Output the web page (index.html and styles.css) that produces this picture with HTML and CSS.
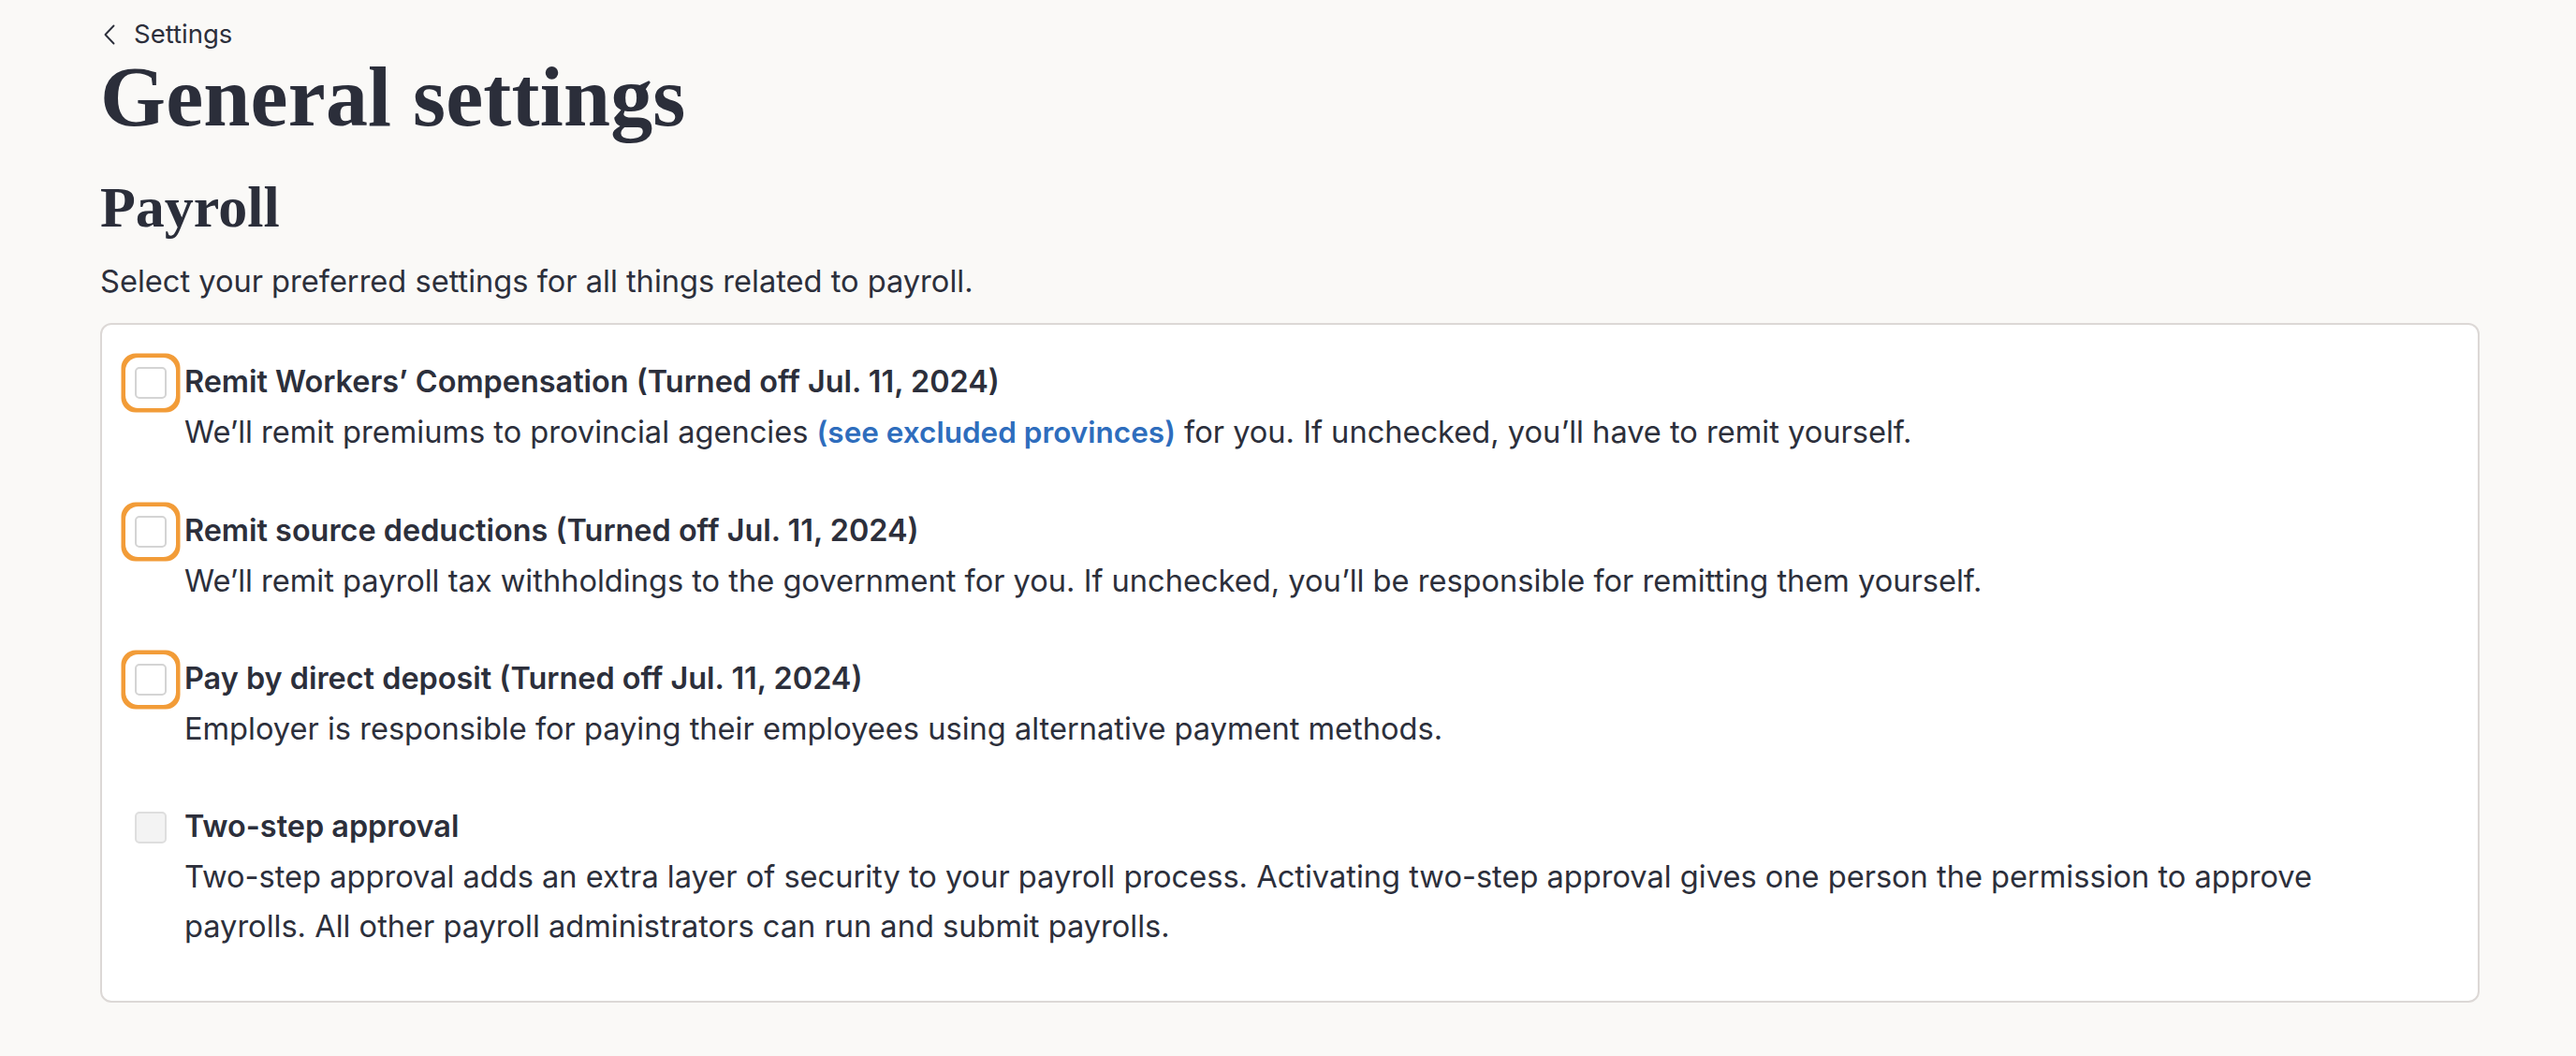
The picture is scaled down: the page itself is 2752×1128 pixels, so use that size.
FILE: index.html
```html
<!DOCTYPE html>
<html lang="en">
<head>
<meta charset="utf-8">
<title>General settings</title>
<link rel="stylesheet" href="styles.css">
</head>
<body>
<main class="page">
  <a class="crumb" href="#">
    <svg class="crumb-icon" width="14" height="22" viewBox="0 0 14 22" aria-hidden="true"><path d="M11.5 1.5 L2.5 11 L11.5 20.5" fill="none" stroke="#2c2f3b" stroke-width="1.9" stroke-linecap="round" stroke-linejoin="round"/></svg>
    <span>Settings</span>
  </a>
  <h1 class="title">General settings</h1>
  <h2 class="section">Payroll</h2>
  <p class="lead">Select your preferred settings for all things related to payroll.</p>

  <div class="card">
    <label class="opt">
      <span class="box box-focus"></span>
      <span class="opt-body">
        <span class="opt-title">Remit Workers’ Compensation (Turned off Jul. 11, 2024)</span>
        <span class="opt-desc">We’ll remit premiums to provincial agencies <a class="link" href="#">(see excluded provinces)</a> for you. If unchecked, you’ll have to remit yourself.</span>
      </span>
    </label>
    <label class="opt">
      <span class="box box-focus"></span>
      <span class="opt-body">
        <span class="opt-title">Remit source deductions (Turned off Jul. 11, 2024)</span>
        <span class="opt-desc">We’ll remit payroll tax withholdings to the government for you. If unchecked, you’ll be responsible for remitting them yourself.</span>
      </span>
    </label>
    <label class="opt">
      <span class="box box-focus"></span>
      <span class="opt-body">
        <span class="opt-title">Pay by direct deposit (Turned off Jul. 11, 2024)</span>
        <span class="opt-desc">Employer is responsible for paying their employees using alternative payment methods.</span>
      </span>
    </label>
    <label class="opt">
      <span class="box box-disabled"></span>
      <span class="opt-body">
        <span class="opt-title">Two-step approval</span>
        <span class="opt-desc">Two-step approval adds an extra layer of security to your payroll process. Activating two-step approval gives one person the permission to approve payrolls. All other payroll administrators can run and submit payrolls.</span>
      </span>
    </label>
  </div>
</main>
</body>
</html>
```
FILE: styles.css
```css
html, body {
  margin: 0;
  padding: 0;
  background: #faf9f7;
}

body {
  font-family: "Inter", "Noto Sans", sans-serif;
  color: #2c2f3b;
}

.page {
  padding: 16px 103px 40px 107px;
  display: flex;
  flex-direction: column;
  align-items: stretch;
}

.crumb {
  display: flex;
  align-items: center;
  gap: 19px;
  height: 40px;
  padding-left: 3px;
  font-size: 27.5px;
  line-height: 40px;
  color: #2c2f3b;
  text-decoration: none;
  align-self: flex-start;
}

.crumb-icon {
  display: block;
  margin-top: 1px;
}

.title {
  margin: -2px 0 0;
  font-family: "Liberation Serif", "Times New Roman", serif;
  font-weight: 700;
  font-size: 90px;
  line-height: 100px;
  color: #2b2e3a;
  letter-spacing: 0.2px;
}

.section {
  margin: 31px 0 0;
  font-family: "Liberation Serif", "Times New Roman", serif;
  font-weight: 700;
  font-size: 62px;
  line-height: 72px;
  color: #2b2e3a;
}

.lead {
  margin: 17px 0 0;
  font-size: 32.6px;
  line-height: 52.7px;
}

.card {
  margin-top: 18px;
  background: #ffffff;
  border: 2px solid #dcd8d6;
  border-radius: 12px;
  padding: 35.5px 60px 1px 35px;
  display: flex;
  flex-direction: column;
}

.opt {
  display: flex;
  align-items: flex-start;
  gap: 19px;
  padding-bottom: 52.7px;
  cursor: pointer;
}

.box {
  flex: 0 0 auto;
  width: 34px;
  height: 34px;
  box-sizing: border-box;
  margin-top: 9.5px;
  border: 2px solid #d4d4d4;
  border-radius: 5px;
  background: #ffffff;
}

.box-focus {
  box-shadow: 0 0 0 10px #ffffff, 0 0 0 14.5px #f29c38;
}

.box-disabled {
  background: #f3f3f3;
  border-color: #dedede;
}

.opt-body {
  display: flex;
  flex-direction: column;
  font-size: 32.6px;
  line-height: 52.7px;
}

.opt-title {
  font-weight: 600;
  font-size: 32.4px;
}

.opt-desc {
  font-weight: 400;
}

.link {
  color: #2e6dbd;
  font-weight: 600;
  font-size: 31.5px;
  text-decoration: none;
}
```
